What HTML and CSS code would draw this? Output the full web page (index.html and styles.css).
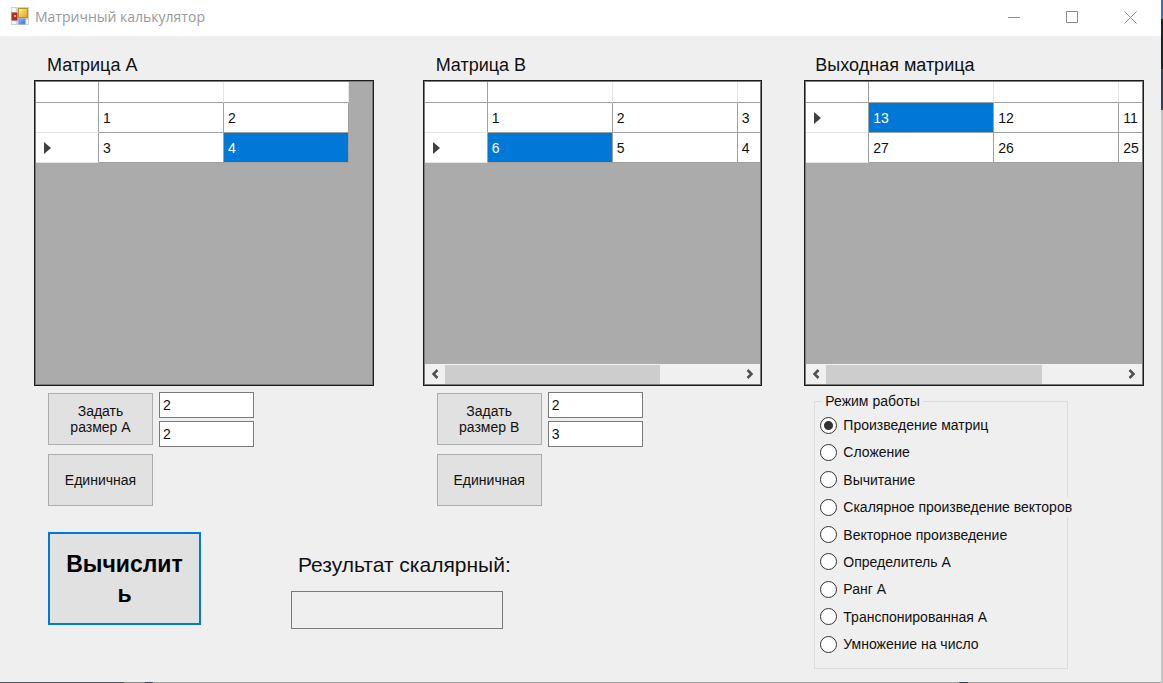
FILE: index.html
```html
<!DOCTYPE html>
<html lang="ru">
<head>
<meta charset="utf-8">
<title>Матричный калькулятор</title>
<link rel="stylesheet" href="styles.css">
</head>
<body>
<div class="window">
  <header class="titlebar">
    <svg class="app-icon" width="18" height="18" viewBox="0 0 18 18" aria-hidden="true">
      <defs>
        <linearGradient id="gold" x1="0" y1="0" x2="1" y2="1"><stop offset="0" stop-color="#fff0a0"/><stop offset="1" stop-color="#e0a400"/></linearGradient>
        <linearGradient id="blue" x1="0" y1="0" x2="1" y2="1"><stop offset="0" stop-color="#8fbcff"/><stop offset="1" stop-color="#2f6be0"/></linearGradient>
      </defs>
      <rect width="18" height="18" fill="#d2d2d2"/>
      <rect x="1" y="1" width="4" height="4" fill="#f8f8f8"/>
      <rect x="1" y="14" width="4" height="3" fill="#f8f8f8"/>
      <rect x="15" y="13" width="2" height="4" fill="#f8f8f8"/>
      <rect x="1" y="6" width="5" height="7" fill="#c0251c" stroke="#a8322c"/>
      <rect x="3" y="8" width="2" height="2" fill="#f0a59b"/>
      <rect x="7.5" y="1.500" width="9" height="9" fill="url(#gold)" stroke="#b8902a"/>
      <rect x="8" y="12" width="6" height="5" fill="url(#blue)" stroke="#6a94e4"/>
    </svg>
    <h1 class="title">Матричный калькулятор</h1>
    <button class="caption" type="button" aria-label="Свернуть"><svg width="13" height="13" viewBox="0 0 13 13"><path d="M0 6.500h12"/></svg></button>
    <button class="caption" type="button" aria-label="Развернуть"><svg width="13" height="13" viewBox="0 0 13 13"><path d="M.5.5h11v11H.5z"/></svg></button>
    <button class="caption" type="button" aria-label="Закрыть"><svg width="13" height="13" viewBox="0 0 13 13"><path d="M.5.5l12 12M12.500.5l-12 12"/></svg></button>
  </header>

  <main class="form">
    <section class="matrix matrix-a">
      <h2 class="caption-text" id="label-a">Матрица A</h2>
      <div class="datagrid">
        <div class="viewport">
          <table class="cells cells-two" aria-labelledby="label-a">
            <thead><tr><th class="row-head"></th><th></th><th></th></tr></thead>
            <tbody>
              <tr><th class="row-head"></th><td>1</td><td>2</td></tr>
              <tr><th class="row-head current"></th><td>3</td><td class="selected">4</td></tr>
            </tbody>
          </table>
        </div>
      </div>
    </section>

    <section class="matrix matrix-b">
      <h2 class="caption-text" id="label-b">Матрица B</h2>
      <div class="datagrid">
        <div class="viewport">
          <table class="cells cells-three" aria-labelledby="label-b">
            <thead><tr><th class="row-head"></th><th></th><th></th><th></th></tr></thead>
            <tbody>
              <tr><th class="row-head"></th><td>1</td><td>2</td><td>3</td></tr>
              <tr><th class="row-head current"></th><td class="selected">6</td><td>5</td><td>4</td></tr>
            </tbody>
          </table>
        </div>
        <div class="scrollbar">
          <button class="arrow" type="button" aria-label="Влево"><svg width="8" height="10" viewBox="0 0 8 10"><path d="M6.500 1L2.500 5l4 4"/></svg></button>
          <div class="track"><div class="thumb"></div></div>
          <button class="arrow" type="button" aria-label="Вправо"><svg width="8" height="10" viewBox="0 0 8 10"><path d="M1.500 1l4 4-4 4"/></svg></button>
        </div>
      </div>
    </section>

    <section class="matrix matrix-out">
      <h2 class="caption-text" id="label-out">Выходная матрица</h2>
      <div class="datagrid">
        <div class="viewport">
          <table class="cells cells-three" aria-labelledby="label-out">
            <thead><tr><th class="row-head"></th><th></th><th></th><th></th></tr></thead>
            <tbody>
              <tr><th class="row-head current"></th><td class="selected">13</td><td>12</td><td>11</td></tr>
              <tr><th class="row-head"></th><td>27</td><td>26</td><td>25</td></tr>
            </tbody>
          </table>
        </div>
        <div class="scrollbar">
          <button class="arrow" type="button" aria-label="Влево"><svg width="8" height="10" viewBox="0 0 8 10"><path d="M6.500 1L2.500 5l4 4"/></svg></button>
          <div class="track"><div class="thumb"></div></div>
          <button class="arrow" type="button" aria-label="Вправо"><svg width="8" height="10" viewBox="0 0 8 10"><path d="M1.500 1l4 4-4 4"/></svg></button>
        </div>
      </div>
    </section>

    <div class="controls controls-a">
      <div class="buttons">
        <button class="button" type="button">Задать<br>размер A</button>
        <button class="button" type="button">Единичная</button>
      </div>
      <div class="sizes">
        <input class="field" type="text" value="2" aria-label="Строки A">
        <input class="field" type="text" value="2" aria-label="Столбцы A">
      </div>
    </div>

    <div class="controls controls-b">
      <div class="buttons">
        <button class="button" type="button">Задать<br>размер B</button>
        <button class="button" type="button">Единичная</button>
      </div>
      <div class="sizes">
        <input class="field" type="text" value="2" aria-label="Строки B">
        <input class="field" type="text" value="3" aria-label="Столбцы B">
      </div>
    </div>

    <fieldset class="modes">
      <legend>Режим работы</legend>
      <div class="options">
        <label class="option"><input type="radio" name="mode" checked>Произведение матриц</label>
        <label class="option"><input type="radio" name="mode">Сложение</label>
        <label class="option"><input type="radio" name="mode">Вычитание</label>
        <label class="option"><input type="radio" name="mode">Скалярное произведение векторов</label>
        <label class="option"><input type="radio" name="mode">Векторное произведение</label>
        <label class="option"><input type="radio" name="mode">Определитель A</label>
        <label class="option"><input type="radio" name="mode">Ранг A</label>
        <label class="option"><input type="radio" name="mode">Транспонированная A</label>
        <label class="option"><input type="radio" name="mode">Умножение на число</label>
      </div>
    </fieldset>

    <div class="actions">
      <button class="button primary" type="button">Вычислить</button>
      <div class="result">
        <label for="scalar">Результат скалярный:</label>
        <input class="scalar" id="scalar" type="text" readonly>
      </div>
    </div>
  </main>
  <div class="bottom-edge"></div>
</div>
<div class="side-edge"></div>
</body>
</html>
```
FILE: styles.css
```css
* {
  box-sizing: border-box;
}

body {
  margin: 0;
  min-height: 100vh;
  display: flex;
  background: #efefef;
  color: #111;
  font: 14px/16px "Liberation Sans", Arial, sans-serif;
}

button,
input {
  font: inherit;
  color: inherit;
}

.window {
  flex: 1;
  min-width: 0;
  display: flex;
  flex-direction: column;
}

.titlebar {
  display: flex;
  align-items: center;
  height: 36px;
  padding: 0 2px 0 11px;
  background: #fff;
}

.app-icon {
  margin-bottom: 4px;
}

.title {
  flex: 1;
  margin: 0 0 2px 6px;
  font: 14px/20px "Open Sans", "Noto Sans", sans-serif;
  color: #999;
}

.caption {
  display: flex;
  align-items: center;
  justify-content: center;
  width: 58px;
  height: 32px;
  margin-bottom: 2px;
  padding: 0;
  border: 0;
  background: none;
}

.caption svg {
  fill: none;
  stroke: #8c8c8c;
}

.form {
  flex: 1;
  display: grid;
  grid-template-columns: minmax(0, 1fr) 49px minmax(0, 1fr) 42px minmax(0, 1fr);
  grid-template-rows: auto auto 1fr;
  padding: 18px 17px 0 34px;
}

.matrix-a { grid-area: 1 / 1; }
.matrix-b { grid-area: 1 / 3; }
.matrix-out { grid-area: 1 / 5; }
.controls-a { grid-area: 2 / 1; }
.controls-b { grid-area: 2 / 3; }
.modes { grid-area: 2 / 5 / 4 / 6; }
.actions { grid-area: 3 / 1 / 4 / 4; }

.caption-text {
  margin: 0 0 4px;
  padding-left: 13px;
  font-size: 18px;
  line-height: 22px;
  font-weight: normal;
}

.matrix-out .caption-text {
  padding-left: 11px;
}

.datagrid {
  display: flex;
  flex-direction: column;
  height: 306px;
  border: 1px solid #1c1c1c;
  box-shadow: inset 0 0 0 1px #7c7c7c;
  padding: 1px;
  background: #ababab;
}

.viewport {
  flex: 1;
  overflow: hidden;
}

.cells {
  table-layout: fixed;
  border-collapse: separate;
  border-spacing: 0;
}

.cells-two { width: 313px; }
.cells-three { width: 438px; }

.cells th,
.cells td {
  height: 30px;
  padding: 0 0 0 4px;
  border: solid #a0a0a0;
  border-width: 0 1px 1px 0;
  background: #fff;
  text-align: left;
}

.cells thead th {
  height: 21px;
  border-right-color: #e5e5e5;
}

.cells .row-head {
  width: 63px;
  border-right-color: #a0a0a0;
}

.cells tbody .row-head {
  border-bottom-color: #e5e5e5;
}

.cells .current {
  padding-left: 8px;
}

.cells .current::before {
  content: "";
  display: block;
  width: 0;
  border: solid transparent;
  border-width: 6px 0 6px 7px;
  border-left-color: #404040;
}

.cells .selected {
  background: #0078d7;
  color: #fff;
}

.scrollbar {
  display: flex;
  height: 20px;
  background: #f0f0f0;
}

.arrow {
  display: flex;
  align-items: center;
  justify-content: center;
  width: 20px;
  padding: 0;
  border: 0;
  background: none;
}

.arrow svg {
  fill: none;
  stroke: #505050;
  stroke-width: 2.5;
}

.track {
  flex: 1;
  padding-top: 1px;
}

.thumb {
  width: 73%;
  height: 100%;
  background: #cdcdcd;
}

.controls {
  display: flex;
  gap: 6px;
  padding: 6px 0 0 14px;
}

.buttons {
  display: grid;
  gap: 9px;
  padding-top: 1px;
}

.button {
  width: 105px;
  height: 52px;
  padding: 0;
  border: 1px solid #adadad;
  background: #e1e1e1;
}

.sizes {
  display: grid;
  gap: 3px;
  align-content: start;
}

.field {
  width: 95px;
  height: 26px;
  padding: 0 3px;
  border: 1px solid #7a7a7a;
  background: #fff;
}

.actions {
  display: flex;
  align-items: flex-start;
  gap: 90px;
  padding: 26px 0 0 14px;
}

.primary {
  width: 153px;
  height: 93px;
  padding: 0 12px;
  border: 2px solid #0078d7;
  font-size: 23px;
  line-height: 30px;
  font-weight: bold;
  color: #000;
  word-break: break-all;
}

.result {
  padding-top: 21px;
}

.result label {
  display: block;
  padding-left: 7px;
  font-size: 21px;
  line-height: 24px;
}

.scalar {
  display: block;
  width: 212px;
  height: 38px;
  margin-top: 14px;
  border: 1px solid #7a7a7a;
  background: #efefef;
}

.modes {
  justify-self: start;
  align-self: start;
  width: 254px;
  min-width: 0;
  margin: 7px 0 0 10px;
  padding: 0 0 14px 5px;
  border: 1px solid #dcdcdc;
}

.modes legend {
  margin-left: 2px;
  padding: 0 3px;
}

.options {
  display: grid;
  align-content: space-between;
  justify-items: start;
  height: 239px;
  margin-top: 6px;
}

.option {
  display: flex;
  align-items: center;
  gap: 6px;
  height: 20px;
  background: #efefef;
  white-space: nowrap;
}

.option input {
  appearance: none;
  width: 17px;
  height: 17px;
  margin: 0;
  border: 1px solid #333;
  border-radius: 50%;
  background: #fff;
}

.option input:checked {
  background: radial-gradient(circle, #333 4px, #fff 5px);
}

.bottom-edge {
  height: 1px;
  background: linear-gradient(90deg, #4c515c 124px, #8a8a8a 124px 145px, #3a4254 145px 153px, transparent 153px),
    linear-gradient(90deg, #a0a0a0 959px, #3a4254 959px 968px, #a0a0a0 968px);
}

.side-edge {
  width: 2px;
  background: linear-gradient(#3a6fd0 19px, #1c222c 19px 69px, #34425a 69px 110px, #c4c4c4 110px);
}
```
